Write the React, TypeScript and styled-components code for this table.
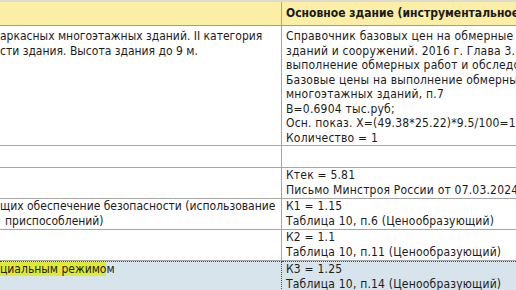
import React from 'react';
import styled, { createGlobalStyle, css } from 'styled-components';

const GlobalStyle = createGlobalStyle`
  html, body {
    margin: 0;
    padding: 0;
    background: #ffffff;
  }
  body {
    font-family: 'DejaVu Sans Condensed', 'Liberation Sans', sans-serif;
    font-size: 12px;
    color: #1c1c1c;
  }
`;

const Sheet = styled.div`
  width: 516px;
  height: 290px;
  overflow: hidden;
  border-top: 2px solid #dedbd0;
`;

const Row = styled.div<{ $header?: boolean; $selected?: boolean; $height: number }>`
  display: grid;
  grid-template-columns: 282px 1fr;
  height: ${(p) => p.$height}px;
  border-bottom: 1px solid #a6a6a6;
  background: #ffffff;
  ${(p) =>
    p.$header &&
    css`
      background: #fbeea6;
      border-bottom-color: #9c9c9c;
    `}
  ${(p) =>
    p.$selected &&
    css`
      background: #d7e4eb;
      border-bottom: none;
    `}
`;

const Cell = styled.div<{ $left?: boolean; $selected?: boolean; $pad: number; $lh: number }>`
  overflow: hidden;
  white-space: nowrap;
  line-height: ${(p) => p.$lh}px;
  padding-top: ${(p) => p.$pad}px;
  padding-left: ${(p) => (p.$left ? 0 : 4)}px;
  letter-spacing: ${(p) => (p.$left ? 0 : 0.2)}px;
  border-right: ${(p) => (p.$left ? '1px solid #a6a6a6' : 'none')};
  ${(p) =>
    p.$selected &&
    css`
      border-top: 1px dotted #4a4a4a;
      border-right-style: ${p.$left ? 'dotted' : 'none'};
      border-right-color: #4a4a4a;
    `}
`;

const HeaderTitle = styled.span`
  font-weight: bold;
  color: #1a1a1a;
  letter-spacing: 0;
`;

const Line = styled.div<{ $indent?: number }>`
  padding-left: ${(p) => p.$indent ?? 0}px;
`;

const Match = styled.span`
  background: #e0ea33;
`;

type RowData = {
  height: number;
  pad: number;
  lh: number;
  left: string[];
  right: string[];
};

const BODY: RowData[] = [
  {
    height: 119,
    pad: 3,
    lh: 14.5,
    left: ['аркасных многоэтажных зданий. II категория', 'сти здания. Высота здания до 9 м.'],
    right: [
      'Справочник базовых цен на обмерные работы и обследование',
      'зданий и сооружений. 2016 г. Глава 3. Базовые цены на',
      'выполнение обмерных работ и обследования зданий',
      'Базовые цены на выполнение обмерных работ каркасных',
      'многоэтажных зданий, п.7',
      'В=0.6904 тыс.руб;',
      'Осн. показ. Х=(49.38*25.22)*9.5/100=118.31',
      'Количество = 1',
    ],
  },
  { height: 21, pad: 0, lh: 15, left: [], right: [] },
  {
    height: 30,
    pad: 0,
    lh: 15,
    left: [],
    right: ['Ктек = 5.81', 'Письмо Минстроя России от 07.03.2024 №13432-ИФ/09'],
  },
  {
    height: 30,
    pad: 0,
    lh: 15,
    left: ['щих обеспечение безопасности (использование', ' приспособлений)'],
    right: ['К1 = 1.15', 'Таблица 10, п.6 (Ценообразующий)'],
  },
  {
    height: 30,
    pad: 0,
    lh: 15,
    left: [],
    right: ['К2 = 1.1', 'Таблица 10, п.11 (Ценообразующий)'],
  },
];

const App: React.FC = () => {
  return (
    <>
      <GlobalStyle />
      <Sheet>
        <Row $header $height={23}>
          <Cell $left $pad={4} $lh={15} />
          <Cell $pad={4} $lh={15}>
            <HeaderTitle>Основное здание (инструментальное обследование)</HeaderTitle>
          </Cell>
        </Row>
        {BODY.map((row, i) => (
          <Row key={i} $height={row.height}>
            <Cell $left $pad={row.pad} $lh={row.lh}>
              {row.left.map((text, j) => (
                <Line key={j} $indent={text.startsWith(' ') ? 5 : 0}>
                  {text.trim()}
                </Line>
              ))}
            </Cell>
            <Cell $pad={row.pad} $lh={row.lh}>
              {row.right.map((text, j) => (
                <Line key={j}>{text}</Line>
              ))}
            </Cell>
          </Row>
        ))}
        <Row $selected $height={40}>
          <Cell $left $selected $pad={0} $lh={15}>
            <Line>
              <Match>циальным режимо</Match>м
            </Line>
          </Cell>
          <Cell $selected $pad={0} $lh={15}>
            <Line>К3 = 1.25</Line>
            <Line>Таблица 10, п.14 (Ценообразующий)</Line>
          </Cell>
        </Row>
      </Sheet>
    </>
  );
};

export default App;
